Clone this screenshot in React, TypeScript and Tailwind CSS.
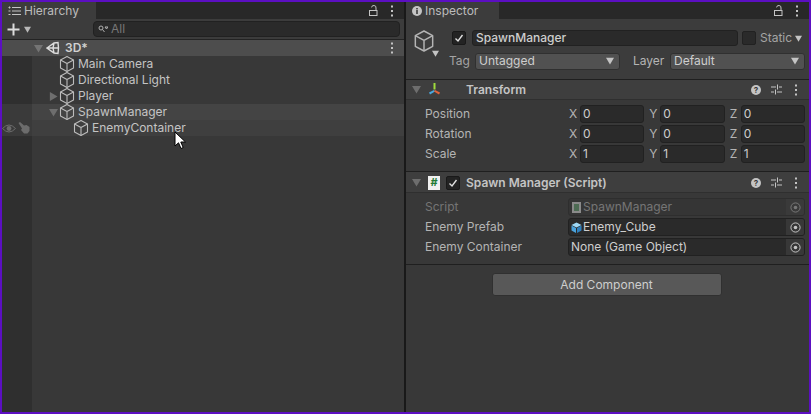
import { ReactNode } from "react";

function Cube({ size = 18, className = "text-[#bcbcbc]" }: { size?: number; className?: string }) {
  return (
    <svg width={size} height={size} viewBox="0 0 18 18" fill="none" stroke="currentColor" strokeWidth="1.1" strokeLinejoin="round" className={`shrink-0 ${className}`}>
      <path d="M9 1.5 L15.5 5 V13 L9 16.5 L2.5 13 V5 Z" />
      <path d="M2.5 5 L9 8.5 L15.5 5 M9 8.5 V16.5" />
    </svg>
  );
}

function Kebab({ className = "" }: { className?: string }) {
  return (
    <svg width="4" height="12" viewBox="0 0 4 12" fill="#c4c4c4" className={`shrink-0 ${className}`}>
      <rect x="1" y="0.5" width="2" height="2" />
      <rect x="1" y="5" width="2" height="2" />
      <rect x="1" y="9.5" width="2" height="2" />
    </svg>
  );
}

function Lock() {
  return (
    <svg width="9" height="11" viewBox="0 0 9 11" fill="none" stroke="#c4c4c4" strokeWidth="1" className="shrink-0">
      <rect x="0.5" y="5.5" width="7.5" height="5" />
      <path d="M7 5.5 V3 A2.2 2.2 0 0 0 2.6 2.4" />
    </svg>
  );
}

function Tri({ dir = "down", color = "#6e6e6e", size = 9 }: { dir?: "down" | "right"; color?: string; size?: number }) {
  return (
    <svg width={size} height={size} viewBox="0 0 10 10" fill={color} className="shrink-0">
      {dir === "down" ? <path d="M0 1 H10 L5 9.5 Z" /> : <path d="M1 0 V10 L9.5 5 Z" />}
    </svg>
  );
}

function Check() {
  return (
    <div className="w-[14px] h-[14px] rounded-[2px] bg-[#232323] border border-[#191919] flex items-center justify-center shrink-0">
      <svg width="10" height="10" viewBox="0 0 10 10" fill="none" stroke="#e0e0e0" strokeWidth="1.4">
        <path d="M1.5 5.5 L4 8 L8.5 2" />
      </svg>
    </div>
  );
}

function HelpSliders() {
  return (
    <div className="flex items-center ml-auto mr-[11px]">
      <svg width="10" height="10" viewBox="0 0 10 10" className="shrink-0">
        <circle cx="5" cy="5" r="5" fill="#c4c4c4" />
        <text x="5" y="8" textAnchor="middle" fontSize="8" fontWeight="700" fill="#383838" fontFamily="Inter, sans-serif">?</text>
      </svg>
      <svg width="11" height="11" viewBox="0 0 11 11" stroke="#c4c4c4" strokeWidth="1" className="ml-[10px] shrink-0">
        <path d="M0 3 H5 M8 3 H11 M6.5 0.5 V5.5 M0 8 H3 M6 8 H11 M4.5 5.5 V10.5" fill="none" />
      </svg>
      <Kebab className="ml-[12px]" />
    </div>
  );
}

function Row({ label, depth, arrow, bg = "", left }: { label: string; depth: number; arrow?: "down" | "right"; bg?: string; left?: ReactNode }) {
  return (
    <div className={`h-[16px] flex items-center ${bg}`}>
      <div className="w-[30px] h-full flex items-center shrink-0">{left}</div>
      <div className="flex items-center h-full" style={{ paddingLeft: depth }}>
        <div className="w-[12px] pl-[3px] flex items-center shrink-0">{arrow && <Tri dir={arrow} />}</div>
        <Cube size={18} />
        <span className="ml-[2px] text-[#c4c4c4]">{label}</span>
      </div>
    </div>
  );
}

function Tab({ icon, label, width }: { icon: ReactNode; label: string; width: string }) {
  return (
    <div className={`h-[17px] bg-[#3c3c3c] flex items-center pl-[6px] text-[#bcbcbc] ${width}`}>
      {icon}
      <span className="ml-[3px]">{label}</span>
    </div>
  );
}

function Vec({ label, values }: { label: string; values: string[] }) {
  return (
    <div className="h-[20px] flex items-center pl-[19px] pr-[4px]">
      <span className="w-[144px] text-[#b4b4b4] shrink-0">{label}</span>
      <div className="flex-1 flex gap-[5px]">
        {values.map((v, i) => (
          <div key={i} className="flex-1 flex items-center">
            <span className="w-[11px] text-[#b4b4b4] shrink-0">{["X", "Y", "Z"][i]}</span>
            <div className="flex-1 h-[18px] rounded-[3px] bg-[#2a2a2a] border border-[#212121] pl-[2px] leading-[16px] text-[#cecece]">{v}</div>
          </div>
        ))}
      </div>
    </div>
  );
}

function ObjField({ label, icon, value, dim = false }: { label: string; icon?: ReactNode; value: string; dim?: boolean }) {
  return (
    <div className="h-[20px] flex items-center pl-[19px] pr-[4px]">
      <span className={`w-[143px] shrink-0 ${dim ? "text-[#757575]" : "text-[#b4b4b4]"}`}>{label}</span>
      <div className={`flex-1 h-[18px] rounded-[3px] border flex items-center overflow-hidden ${dim ? "bg-[#353535] border-[#2e2e2e] text-[#757575]" : "bg-[#2a2a2a] border-[#212121] text-[#cecece]"}`}>
        <div className="pl-[2px] flex items-center flex-1 min-w-0">
          {icon}
          <span className={icon ? "ml-[1px]" : ""}>{value}</span>
        </div>
        <div className={`w-[18px] h-full flex items-center justify-center ${dim ? "bg-[#3a3a3a]" : "bg-[#383838]"}`}>
          <svg width="11" height="11" viewBox="0 0 11 11" className="shrink-0">
            <circle cx="5.5" cy="5.5" r="4.6" fill="none" stroke={dim ? "#777" : "#c4c4c4"} strokeWidth="1" />
            <circle cx="5.5" cy="5.5" r="1.8" fill={dim ? "#777" : "#c4c4c4"} />
          </svg>
        </div>
      </div>
    </div>
  );
}

export default function App() {
  return (
    <div className="w-[811px] h-[414px] overflow-hidden border-2 border-[#5c0fc2] bg-[#191919] flex text-[12px] leading-[16px] font-['Inter',sans-serif]">
      {/* Hierarchy */}
      <div className="w-[402px] h-full flex flex-col bg-[#383838] shrink-0">
        <div className="h-[17px] bg-[#282828] flex items-center shrink-0">
          <Tab
            width="w-[94px]"
            label="Hierarchy"
            icon={
              <svg width="13" height="10" viewBox="0 0 13 10" stroke="#c4c4c4" strokeWidth="1" className="shrink-0">
                <path d="M4 1.5 H13 M4 5 H13 M4 8.5 H13 M0.5 1.5 H2.5 M1.5 0.5 V2.5 M0.5 5 H2.5 M0.5 8.5 H2.5" />
              </svg>
            }
          />
          <div className="ml-auto flex items-center mr-[10px]">
            <Lock />
            <Kebab className="ml-[12px]" />
          </div>
        </div>
        <div className="h-[21px] bg-[#3c3c3c] border-b border-[#232323] flex items-center shrink-0">
          <svg width="13" height="13" viewBox="0 0 13 13" stroke="#dcdcdc" strokeWidth="2" className="ml-[5px] shrink-0">
            <path d="M6.5 0.5 V12.5 M0.5 6.5 H12.5" />
          </svg>
          <div className="ml-[4px]"><Tri color="#b8b8b8" size={7} /></div>
          <div className="ml-[62px] w-[307px] h-[16px] rounded-[4px] bg-[#2a2a2a] border border-[#212121] flex items-center pl-[4px] text-[#777]">
            <svg width="10" height="8" viewBox="0 0 10 8" fill="none" stroke="#b0b0b0" strokeWidth="1" className="shrink-0">
              <circle cx="3" cy="3" r="2" />
              <path d="M4.5 4.5 L6.5 7 M7 2 H10 L8.5 4 Z" />
            </svg>
            <span className="ml-[3px]">All</span>
          </div>
        </div>
        <div className="h-[16px] bg-[#4d4d4d] flex items-center shrink-0">
          <div className="w-[32px] shrink-0" />
          <Tri color="#747474" />
          <svg width="14" height="14" viewBox="0 0 14 14" fill="none" stroke="#dcdcdc" strokeWidth="1.4" className="ml-[3px] shrink-0">
            <path d="M1 7 L8 2 L12 1.5 L12.5 7 L12 12.5 L8 12 Z M8 2 L7 7 L8 12 M1 7 H12.5" />
          </svg>
          <span className="ml-[5px] font-semibold text-[#d0d0d0]">3D*</span>
          <Kebab className="ml-auto mr-[10px]" />
        </div>
        <div className="flex-1 flex flex-col relative">
          <Row label="Main Camera" depth={14} left={<div className="w-full h-full bg-[#2f2f2f]" />} />
          <Row label="Directional Light" depth={14} left={<div className="w-full h-full bg-[#2f2f2f]" />} />
          <Row label="Player" depth={14} arrow="right" left={<div className="w-full h-full bg-[#2f2f2f]" />} />
          <Row label="SpawnManager" depth={14} arrow="down" bg="bg-[#444444]" left={<div className="w-full h-full bg-[#3a3a3a]" />} />
          <Row
            label="EnemyContainer"
            depth={28}
            bg="bg-[#3f3f3f]"
            left={
              <div className="w-full h-full bg-[#3a3a3a] flex items-center gap-[2px]">
                <svg width="14" height="9" viewBox="0 0 14 9" className="shrink-0">
                  <path d="M0.5 4.5 Q7 -2.5 13.5 4.5 Q7 11.5 0.5 4.5 Z" fill="none" stroke="#6c6c6c" strokeWidth="1" />
                  <circle cx="7" cy="4.5" r="2.4" fill="#6c6c6c" />
                </svg>
                <svg width="12" height="12" viewBox="0 0 12 12" fill="#6c6c6c" className="shrink-0">
                  <path d="M0.5 1 L2 0 L6 3.5 L8.5 3 L11.5 5 V9 L9.5 11.5 H6 L3 8 L4 6.5 Z" />
                </svg>
              </div>
            }
          />
          <div className="flex-1 flex">
            <div className="w-[30px] bg-[#2f2f2f]" />
          </div>
          {/* mouse cursor */}
          <svg width="13" height="20" viewBox="0 0 13 20" className="absolute left-[172px] top-[75px]">
            <path d="M1 1 V15 L4.5 11.8 L7 17.5 L9.2 16.5 L6.8 11 H11.5 Z" fill="#fff" stroke="#000" strokeWidth="1" />
          </svg>
        </div>
      </div>
      {/* Inspector */}
      <div className="ml-[2px] flex-1 h-full flex flex-col bg-[#383838] min-w-0">
        <div className="h-[17px] bg-[#282828] flex items-center shrink-0">
          <Tab
            width="w-[93px]"
            label="Inspector"
            icon={
              <svg width="10" height="10" viewBox="0 0 10 10" className="shrink-0">
                <circle cx="5" cy="5" r="5" fill="#c4c4c4" />
                <rect x="4.2" y="4" width="1.6" height="4" fill="#3c3c3c" />
                <rect x="4.2" y="2" width="1.6" height="1.4" fill="#3c3c3c" />
              </svg>
            }
          />
          <div className="ml-auto flex items-center mr-[10px]">
            <Lock />
            <Kebab className="ml-[12px]" />
          </div>
        </div>
        {/* object header */}
        <div className="h-[61px] bg-[#3c3c3c] border-b border-[#1f1f1f] flex shrink-0">
          <div className="w-[40px] pl-[6px] pt-[10px] shrink-0 relative">
            <Cube size={24} className="text-[#b4b4b4]" />
            <div className="absolute left-[26px] top-[31px]">
              <Tri color="#c4c4c4" size={7} />
            </div>
          </div>
          <div className="flex-1 flex flex-col pt-[11px] pr-[4px] min-w-0">
            <div className="h-[16px] flex items-center">
              <div className="ml-[6px]"><Check /></div>
              <div className="ml-[6px] w-[266px] h-[16px] rounded-[3px] bg-[#2a2a2a] border border-[#212121] pl-[3px] leading-[14px] font-medium text-[#cecece]">SpawnManager</div>
              <div className="ml-[4px] w-[14px] h-[14px] rounded-[2px] bg-[#2a2a2a] border border-[#212121]" />
              <span className="ml-[4px] text-[#a4a4a4]">Static</span>
              <div className="ml-[3px]"><Tri color="#c4c4c4" size={7} /></div>
            </div>
            <div className="h-[18px] mt-[6px] flex items-center">
              <span className="w-[27px] ml-[3px] text-[#a4a4a4]">Tag</span>
              <div className="ml-[-1px] w-[145px] h-[17px] rounded-[3px] bg-[#515151] border border-[#303030] flex items-center pl-[3px] pr-[5px] text-[#cecece]">
                Untagged
                <div className="ml-auto"><Tri color="#c4c4c4" size={8} /></div>
              </div>
              <span className="ml-[13px] w-[34px] text-[#b4b4b4]">Layer</span>
              <div className="ml-[3px] w-[135px] h-[17px] rounded-[3px] bg-[#515151] border border-[#303030] flex items-center pl-[3px] pr-[5px] text-[#cecece]">
                Default
                <div className="ml-auto"><Tri color="#c4c4c4" size={8} /></div>
              </div>
            </div>
          </div>
        </div>
        {/* Transform */}
        <div className="h-[20px] bg-[#3e3e3e] border-b border-[#2f2f2f] flex items-center font-semibold text-[#c4c4c4] shrink-0">
          <div className="ml-[6px]"><Tri color="#6e6e6e" /></div>
          <svg width="13" height="13" viewBox="0 0 13 13" className="ml-[7px] shrink-0">
            <rect x="5.5" y="0" width="2" height="6.5" fill="#9fdc3c" />
            <path d="M6 7 L1 9.5 L2 11.5 L7 8.5 Z" fill="#4aa8e0" />
            <path d="M7 7 L12 9.5 L11 11.5 L6 8.5 Z" fill="#e0633c" />
          </svg>
          <span className="ml-[25px]">Transform</span>
          <HelpSliders />
        </div>
        <div className="h-[72px] border-b border-[#1f1f1f] flex flex-col pt-[4px] shrink-0">
          <Vec label="Position" values={["0", "0", "0"]} />
          <Vec label="Rotation" values={["0", "0", "0"]} />
          <Vec label="Scale" values={["1", "1", "1"]} />
        </div>
        {/* Script */}
        <div className="h-[21px] pt-[1px] bg-[#3e3e3e] border-b border-[#2f2f2f] flex items-center font-semibold text-[#c4c4c4] shrink-0">
          <div className="ml-[6px]"><Tri color="#6e6e6e" /></div>
          <div className="ml-[7px] w-[12px] h-[14px] bg-[#f0f0f0] flex items-center justify-center text-[#1d7a34] text-[11px] font-bold leading-none shrink-0">#</div>
          <div className="ml-[6px]"><Check /></div>
          <span className="ml-[6px]">Spawn Manager (Script)</span>
          <HelpSliders />
        </div>
        <div className="h-[72px] border-b border-[#1f1f1f] flex flex-col pt-[4px] shrink-0">
          <ObjField
            label="Script"
            dim
            value="SpawnManager"
            icon={
              <div className="w-[9px] h-[11px] ml-[1px] mr-[1px] bg-[#8a8a8a] flex items-center justify-center shrink-0">
                <div className="w-[5px] h-[7px] bg-[#4d6b53]" />
              </div>
            }
          />
          <ObjField
            label="Enemy Prefab"
            value="Enemy_Cube"
            icon={
              <svg width="11" height="11" viewBox="0 0 11 11" className="shrink-0">
                <path d="M5.5 0.5 L10.5 3 L5.5 5.5 L0.5 3 Z" fill="#9fd8f5" />
                <path d="M0.5 3.6 L5 6 V11 L0.5 8.5 Z" fill="#4ba3dc" />
                <path d="M10.5 3.6 L6 6 V11 L10.5 8.5 Z" fill="#2f80bd" />
              </svg>
            }
          />
          <ObjField label="Enemy Container" value="None (Game Object)" />
        </div>
        <div className="flex justify-center pt-[8px] pr-[2px]">
          <div className="w-[230px] h-[23px] rounded-[3px] bg-[#585858] border border-[#303030] flex items-center justify-center text-[#cecece]">
            Add Component
          </div>
        </div>
      </div>
    </div>
  );
}
